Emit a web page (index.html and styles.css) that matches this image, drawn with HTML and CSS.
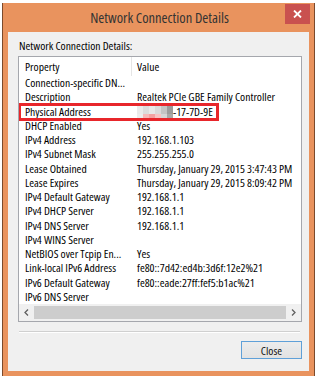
FILE: index.html
```html
<!DOCTYPE html>
<html lang="en">
<head>
    <meta charset="UTF-8">
    <meta name="viewport" content="width=device-width, initial-scale=1.0">
    <title>Network Connection Details</title>
    <link rel="stylesheet" href="styles.css">
</head>
<body>
    <div class="window">
        <div class="titlebar">
            <span class="title">Network Connection Details</span>
            <button class="close-x" aria-label="Close">
                <svg width="9" height="8" viewBox="0 0 9 8"><path d="M1 0.5 L8 7.5 M8 0.5 L1 7.5" stroke="#fff" stroke-width="1.8"/></svg>
            </button>
        </div>
        <div class="dialog-body">
            <p class="caption">Network Connection Details:</p>
            <div class="listbox">
                <div class="list-head">
                    <span class="cell-prop">Property</span>
                    <span class="cell-val">Value</span>
                </div>
                <div class="list-rows">
                    <div class="row"><span class="cell-prop">Connection-specific DN...</span><span class="cell-val"></span></div>
                    <div class="row"><span class="cell-prop">Description</span><span class="cell-val">Realtek PCIe GBE Family Controller</span></div>
                    <div class="row marked">
                        <span class="cell-prop">Physical Address</span>
                        <span class="cell-val"><span class="censor"></span>-17-7D-9E</span>
                        <div class="highlight"></div>
                    </div>
                    <div class="row"><span class="cell-prop">DHCP Enabled</span><span class="cell-val">Yes</span></div>
                    <div class="row"><span class="cell-prop">IPv4 Address</span><span class="cell-val">192.168.1.103</span></div>
                    <div class="row"><span class="cell-prop">IPv4 Subnet Mask</span><span class="cell-val">255.255.255.0</span></div>
                    <div class="row"><span class="cell-prop">Lease Obtained</span><span class="cell-val">Thursday, January 29, 2015 3:47:43 PM</span></div>
                    <div class="row"><span class="cell-prop">Lease Expires</span><span class="cell-val">Thursday, January 29, 2015 8:09:42 PM</span></div>
                    <div class="row"><span class="cell-prop">IPv4 Default Gateway</span><span class="cell-val">192.168.1.1</span></div>
                    <div class="row"><span class="cell-prop">IPv4 DHCP Server</span><span class="cell-val">192.168.1.1</span></div>
                    <div class="row"><span class="cell-prop">IPv4 DNS Server</span><span class="cell-val">192.168.1.1</span></div>
                    <div class="row"><span class="cell-prop">IPv4 WINS Server</span><span class="cell-val"></span></div>
                    <div class="row"><span class="cell-prop">NetBIOS over Tcpip En...</span><span class="cell-val">Yes</span></div>
                    <div class="row"><span class="cell-prop">Link-local IPv6 Address</span><span class="cell-val">fe80::7d42:ed4b:3d6f:12e2%21</span></div>
                    <div class="row"><span class="cell-prop">IPv6 Default Gateway</span><span class="cell-val">fe80::eade:27ff:fef5:b1ac%21</span></div>
                    <div class="row"><span class="cell-prop">IPv6 DNS Server</span><span class="cell-val"></span></div>
                </div>
                <div class="hscroll">
                    <span class="arrow">
                        <svg width="5" height="7" viewBox="0 0 5 7"><path d="M4 0.5 L1 3.5 L4 6.5" fill="none" stroke="#606060" stroke-width="1.3"/></svg>
                    </span>
                    <span class="thumb"></span>
                    <span class="arrow">
                        <svg width="5" height="7" viewBox="0 0 5 7"><path d="M1 0.5 L4 3.5 L1 6.5" fill="none" stroke="#606060" stroke-width="1.3"/></svg>
                    </span>
                </div>
            </div>
            <div class="separator"></div>
            <div class="actions">
                <button class="btn">Close</button>
            </div>
        </div>
    </div>
</body>
</html>
```

FILE: styles.css
```css
body {
    margin: 0;
    background: #fff;
    font-family: "Open Sans", "Liberation Sans", Arial, sans-serif;
    font-stretch: 75%;
    font-size: 11.6px;
    color: #000;
}

.window {
    margin: 3px 0 0 2px;
    width: 313px;
    height: 373px;
    box-sizing: border-box;
    background: #e9935e; /* win8 orange frame */
    border-left: 1px solid #7b4a2c;
    border-right: 1px solid #7b4a2c;
    padding: 0 5px 5px 5px;
    display: flex;
    flex-direction: column;
}

.titlebar {
    height: 29px;
    display: grid;
    align-items: center;
}

.title, .close-x {
    grid-area: 1 / 1;
}

.title {
    justify-self: center;
    font-stretch: 87.5%;
    font-size: 14.5px;
    color: #333;
    padding-left: 2px;
    margin-top: -1px;
}

.close-x {
    justify-self: end;
    align-self: start;
    width: 25px;
    height: 20px;
    margin: 1px -1px 0 0;
    border: none;
    padding: 0;
    background: #c9514f;
    display: flex;
    align-items: center;
    justify-content: center;
}

.dialog-body {
    flex: 1;
    background: #f0f0f0;
    padding: 7px 7px 0 10px;
}

.caption {
    margin: 0 0 3px 1px;
    line-height: 14px;
}

.listbox {
    border: 1px solid #a5a7ad;
    background: #fff;
    overflow: hidden;
}

.list-head {
    height: 19px;
    display: grid;
    grid-template-columns: 113px 1fr;
    align-items: center;
}

.list-head .cell-prop {
    border-right: 1px solid #e5e5e5;
    height: 19px;
    line-height: 19px;
}

.cell-prop {
    padding-left: 6px;
    overflow: hidden;
}

.cell-val {
    padding-left: 5px;
    display: flex;
    align-items: center;
}

.row {
    height: 14.27px;
    line-height: 14.27px;
    display: grid;
    grid-template-columns: 113px 1fr;
    white-space: nowrap;
}

.marked {
    position: relative;
}

.highlight {
    position: absolute;
    left: -1px;
    top: -1.5px;
    width: 201px;
    height: 18px;
    box-sizing: border-box;
    border: 3px solid #e8262b;
}

.censor {
    display: inline-block;
    width: 36px;
    height: 12px;
    background:
        linear-gradient(to right, #ededed 0 6px, #f6b9b9 6px 12px, #f3a2a2 12px 18px, #f7c4c4 18px 24px, #d6d6d6 24px 30px, #a9a9a9 30px) bottom / 100% 4px no-repeat,
        linear-gradient(to right, #eaeaea 0 6px, #dcdcdc 6px 12px, #e8e8e8 12px 18px, #dadada 18px 24px, #c4c4c4 24px 30px, #9c9c9c 30px);
}

.hscroll {
    height: 17px;
    display: flex;
    align-items: center;
    background: #f0f0f0;
}

.arrow {
    width: 15px;
    height: 17px;
    display: flex;
    align-items: center;
    justify-content: center;
}

.thumb {
    flex: 1;
    height: 13px;
    background: #cdcdcd;
}

.separator {
    margin: 9px 2px 0 1px;
    height: 1px;
    background: #d0d0d0;
    border-bottom: 1px solid #fff;
}

.actions {
    display: flex;
    justify-content: flex-end;
    margin-top: 8px;
}

.btn {
    width: 61px;
    height: 18px;
    padding: 0;
    font: inherit;
    color: #111;
    border: 1px solid #5fa0d8;
    background: linear-gradient(#ececec, #e2e2e2);
}
```
